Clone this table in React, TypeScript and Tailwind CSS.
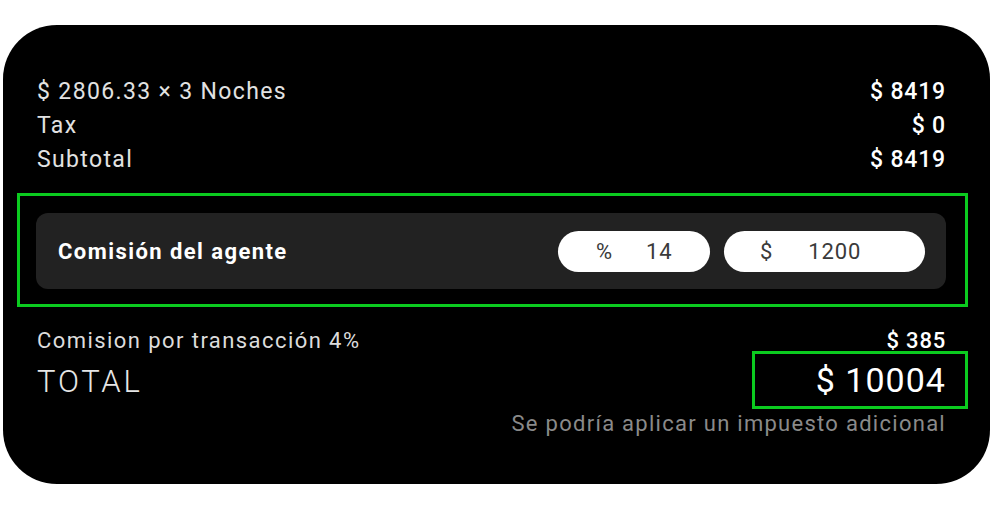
import React from 'react';

const rows = [
  { label: '$ 2806.33 × 3 Noches', value: '$ 8419' },
  { label: 'Tax', value: '$ 0' },
  { label: 'Subtotal', value: '$ 8419' },
];

const App: React.FC = () => {
  return (
    <div className="min-h-screen bg-white pt-[25px] pl-[3px]" style={{ fontFamily: 'Roboto, "Noto Sans", sans-serif' }}>
      <div className="w-[987px] h-[459px] bg-black rounded-[54px] pt-[50px] pl-[34px] pr-[45px]">
        {/* Price rows */}
        {rows.map((row) => (
          <div key={row.label} className="flex justify-between items-center h-[34px] text-[23px]">
            <span className="text-[#e2e2e2] tracking-[0.059em]">{row.label}</span>
            <span className="text-white font-medium tracking-[0.036em] -mr-[1px]">{row.value}</span>
          </div>
        ))}

        {/* Agent commission */}
        <div className="mt-[16px] -ml-[20px] -mr-[23px] border-[3px] border-[#0bcb1f] pt-[17px] pb-[15px] pl-[16px] pr-[19px]">
          <div className="h-[76px] bg-[#222222] rounded-[12px] flex items-center justify-between pl-[22px] pr-[21px]">
            <span className="text-white font-bold text-[22px] tracking-[0.065em]">Comisión del agente</span>
            <div className="flex gap-[14px]">
              <div className="w-[152px] h-[41px] rounded-full bg-white flex items-center text-[22px] text-[#3a3a3a] tracking-[0.04em]">
                <span className="ml-[38px]">%</span>
                <span className="ml-[33px]">14</span>
              </div>
              <div className="w-[201px] h-[41px] rounded-full bg-white flex items-center text-[22px] text-[#3a3a3a] tracking-[0.04em]">
                <span className="ml-[36px]">$</span>
                <span className="ml-[35px]">1200</span>
              </div>
            </div>
          </div>
        </div>

        {/* Transaction fee */}
        <div className="mt-[19px] flex justify-between items-center h-[28px] text-[22px]">
          <span className="text-[#dcdcdc] tracking-[0.065em]">Comision por transacción 4%</span>
          <span className="text-white font-medium tracking-[0.036em] -mr-[1px]">$ 385</span>
        </div>

        {/* Total */}
        <div className="-mt-[3px] flex justify-between items-center">
          <span className="text-[#e6e6e6] text-[31px] font-light tracking-[0.09em] mt-[4px]">TOTAL</span>
          <div className="w-[216px] h-[58px] -mr-[23px] border-[3px] border-[#0bcb1f] flex items-center justify-end pr-[19px]">
            <span className="text-white text-[34px] tracking-[0.03em]">$ 10004</span>
          </div>
        </div>
        <div className="flex justify-end h-[29px] items-center text-[22px] text-[#8a8a8a] tracking-[0.058em] -mr-[1px]">
          Se podría aplicar un impuesto adicional
        </div>
      </div>
    </div>
  );
};

export default App;
